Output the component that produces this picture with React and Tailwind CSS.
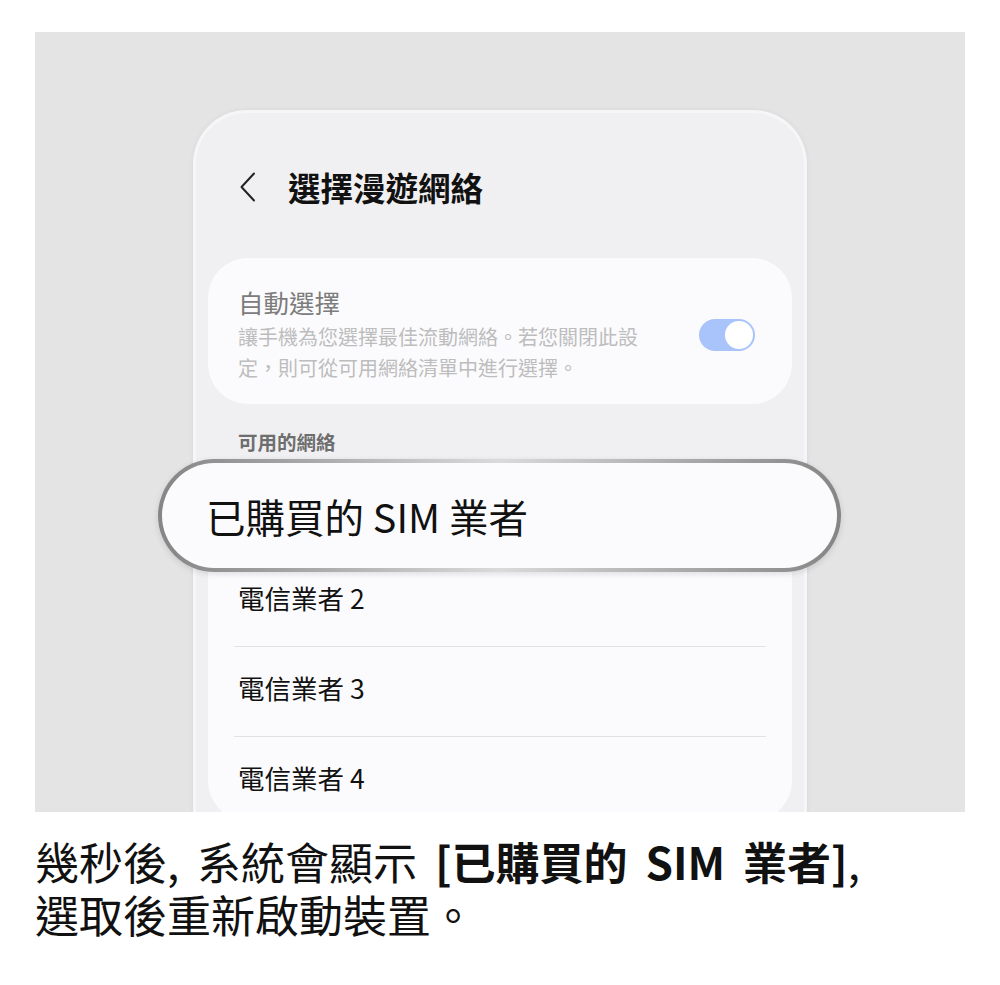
const carriers = ["已購買的 SIM 業者", "電信業者 2", "電信業者 3", "電信業者 4"];

function Toggle() {
  return (
    <div className="w-[56px] h-[32px] rounded-full bg-[#a8c4fb] flex items-center justify-end px-[2px]">
      <div className="w-[28px] h-[28px] rounded-full bg-white" />
    </div>
  );
}

function BackArrow() {
  return (
    <svg width="17" height="30" viewBox="0 0 17 30" fill="none" className="ml-[31px]">
      <path d="M15 1.5 L2.5 15 L15 28.5" stroke="#222" strokeWidth="2" strokeLinecap="round" strokeLinejoin="round" />
    </svg>
  );
}

function Phone() {
  return (
    <div className="ml-[158px] mt-[78px] w-[614px] h-[760px] rounded-t-[54px] border-[3px] border-b-0 border-[#f6f6f8] bg-[#f0f0f2] shadow-[0_0_5px_rgba(0,0,0,0.06)] px-[12px]">
      <div className="h-[145px] flex items-end pb-[51px]">
        <div className="h-[40px] flex items-center">
          <BackArrow />
        </div>
        <h1 className="ml-[32px] text-[32.5px] leading-[40px] font-bold text-[#111]">選擇漫遊網絡</h1>
      </div>

      <div className="rounded-[40px] bg-[#fbfbfd] pl-[30px] pr-[37px] pt-[29px] pb-[21px] flex items-center justify-between">
        <div>
          <div className="text-[25.5px] leading-[30px] text-[#7c7c7c]">自動選擇</div>
          <div className="mt-[4px] text-[20px] leading-[31px] text-[#bdbdbd]">
            讓手機為您選擇最佳流動網絡。若您關閉此設
            <br />
            定，則可從可用網絡清單中進行選擇。
          </div>
        </div>
        <Toggle />
      </div>

      <div className="mt-[26px] ml-[30px] text-[19.5px] leading-[24px] font-bold text-[#6e6e6e]">可用的網絡</div>

      <div className="mt-[13px] rounded-[40px] bg-[#fbfbfd]">
        {carriers.map((name, i) => (
          <div key={name}>
            {i > 0 && <div className="mx-[26px] h-px bg-[#e2e2e4]" />}
            <div className={`${i === 3 ? "h-[84px] pb-[2px]" : "h-[89px] pb-[8px]"} flex items-center pl-[30px] text-[26.5px] text-[#111]`}>
              {name}
            </div>
          </div>
        ))}
      </div>
    </div>
  );
}

export default function App() {
  return (
    <div
      className="w-[1000px] h-[985px] bg-white"
      style={{ fontFamily: '"Noto Sans CJK TC", "Noto Sans", sans-serif' }}
    >
      <div className="pt-[32px] pl-[35px]">
        <div className="relative w-[930px] h-[780px] bg-[#e4e4e4] overflow-hidden">
          <Phone />

          {/* highlighted carrier row */}
          <div className="absolute left-[123px] top-[427px] w-[683px] h-[113px] rounded-full p-[4px] bg-[linear-gradient(to_right,#858585,#a5a5a5_20%,#dadada_50%,#a5a5a5_80%,#858585)] shadow-[0_2px_6px_rgba(0,0,0,0.12)]">
            <div className="w-full h-full rounded-full bg-[#fbfbfd] flex items-center pl-[44px] text-[39.5px] text-[#111]">
              已購買的 SIM 業者
            </div>
          </div>
        </div>
      </div>

      <div className="mt-[23px] pl-[35px] text-[44px] leading-[53px] text-[#111]">
        <span className="[word-spacing:8px]">
          幾秒後, 系統會顯示 <span className="font-bold">[已購買的 SIM 業者]</span>,
        </span>
        <br />
        選取後重新啟動裝置。
      </div>
    </div>
  );
}
